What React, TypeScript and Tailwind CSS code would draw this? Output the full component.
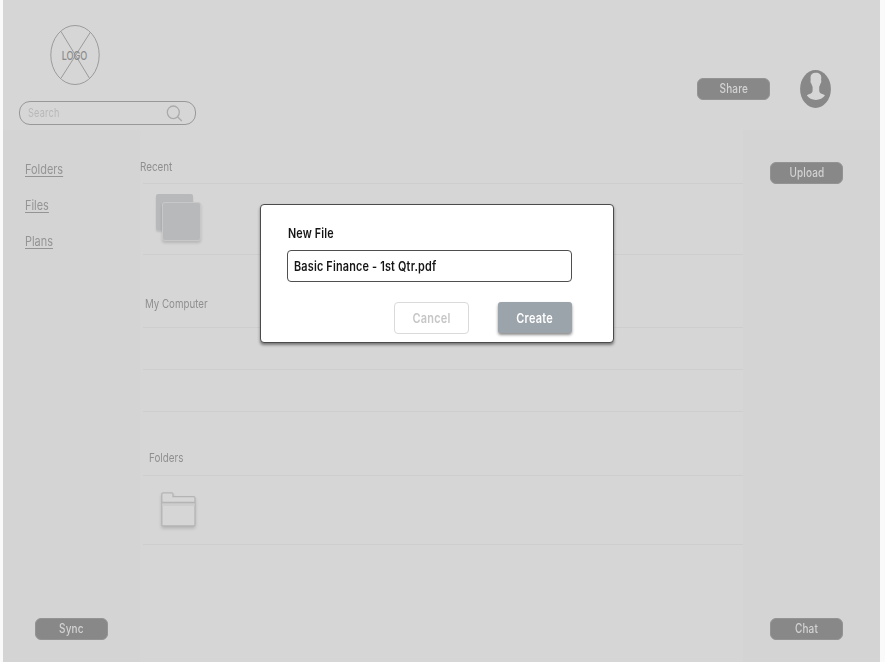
import type { ReactNode } from "react";
import { twMerge } from "tailwind-merge";

function Label({ children, className }: { children: ReactNode; className?: string }) {
  return (
    <span className={twMerge("block w-max origin-left scale-x-[0.82] whitespace-nowrap", className)}>
      {children}
    </span>
  );
}

function PillButton({ label, className }: { label: string; className?: string }) {
  return (
    <button
      className={twMerge(
        "flex h-[22px] w-[73px] items-center justify-center rounded-[6px] border border-[#939393] bg-[#888888] text-[12.5px] leading-[20px] font-medium tracking-[0.2px] text-[#d3d3d3]",
        className,
      )}
    >
      <span className="block scale-x-[0.8]">{label}</span>
    </button>
  );
}

function Logo() {
  return (
    <svg className="block h-[62px] w-[50px]" viewBox="0 0 50 62" fill="none" stroke="#9b9b9b">
      <ellipse cx="25" cy="31" rx="24.2" ry="29.5" />
      <path d="M10.8 7.2 39.6 54.5M40.4 8.2 10.8 54.5" />
      <text
        transform="translate(24.5 35.5) scale(.76 1)"
        textAnchor="middle"
        fontSize="12"
        fontWeight="500"
        fill="#8c8c8c"
        stroke="none"
      >
        LOGO
      </text>
    </svg>
  );
}

function Avatar() {
  return (
    <svg className="block h-[38px] w-[31px]" viewBox="0 0 31 38">
      <ellipse cx="15.5" cy="19" rx="15.4" ry="18.9" fill="#888888" />
      <path
        fill="#d6d6d6"
        d="M15.8 2.7C12.4 2.7 10.5 4.5 10.5 7.6L10.7 10C10.2 11 10.6 13 11.3 13.6C11.6 15 12.1 16 12.6 16.8V20.5C12.6 22.6 11.4 23.5 9.6 24.1C8.200 24.500 7.300 24.900 6.900 25.500C8.800 28.300 11.900 29.900 15.800 29.900S23 28.300 24.900 25.500C24.500 24.900 23.600 24.500 22.200 24.100C20.400 23.500 19.200 22.600 19.200 20.500V16.800C19.700 16 20.200 15 20.500 13.600C21.200 13 21.600 11 21.100 10L21.300 7.600C21.300 4.500 19.200 2.700 15.800 2.700Z"
      />
    </svg>
  );
}

function FolderIcon() {
  return (
    <svg
      className="block h-[36px] w-[36px] overflow-visible drop-shadow-[0_2px_1.5px_rgba(0,0,0,0.14)]"
      viewBox="0 0 36 36"
      fill="#d6d6d6"
      stroke="#b4b4b4"
      strokeWidth="1.3"
    >
      <path d="M.8 32.5V2.2Q.8.8 2.2.8H10.5q1.5 0 1.5 1.5V4.7H32.5q1.5 0 1.5 1.5V32.5q0 1.5-1.5 1.5H2.3Q.8 34 .8 32.5Z" />
      <path d="M1.500 12.500h32" stroke="#cdcdcd" strokeWidth="3" />
      <path d="M.8 10.500h33.200" />
    </svg>
  );
}

export default function App() {
  return (
    <div className="relative h-[662px] w-[885px] overflow-hidden bg-[#fafafa] pl-[3px] font-[Inter,'Liberation_Sans',sans-serif]">
      <div className="flex h-full w-[877px] flex-col bg-[#d6d6d6]">
        <header className="flex h-[130px] shrink-0 justify-between pr-[49px] pl-[16px]">
          <div className="flex flex-col pt-[24px]">
            <div className="pl-[31px]">
              <Logo />
            </div>
            <div className="mt-[15px] flex h-[24px] w-[177px] items-center justify-between rounded-[11px] border border-[#989898] pr-[12px] pl-[8px]">
              <Label className="scale-x-[0.76] text-[12px] tracking-[0.3px] text-[#b8b8b8]">Search</Label>
              <svg className="h-[17px] w-[17px]" viewBox="0 0 17 17" fill="none" stroke="#ababab" strokeWidth="1.3">
                <ellipse cx="7.3" cy="7.3" rx="6" ry="6.3" />
                <path d="m11.5 11.8 4.3 4.2" />
              </svg>
            </div>
          </div>
          <div className="flex items-start">
            <PillButton label="Share" className="mt-[78px]" />
            <div className="mt-[70px] ml-[30px]">
              <Avatar />
            </div>
          </div>
        </header>

        <div className="flex min-h-0 flex-1">
          <aside className="flex w-[137px] shrink-0 flex-col justify-between bg-[#d4d4d4] pb-[22px] pl-[22px]">
            <nav className="flex flex-col gap-[16px] pt-[29px] text-[13px] leading-[20px] text-[#949494]">
              <Label className="scale-x-[0.84] underline underline-offset-[2px]">Folders</Label>
              <Label className="scale-x-[0.84] underline underline-offset-[2px]">Files</Label>
              <Label className="scale-x-[0.84] underline underline-offset-[2px]">Plans</Label>
            </nav>
            <PillButton label="Sync" className="ml-[10px]" />
          </aside>

          <main className="w-[603px] shrink-0 text-[12px] text-[#8f8f8f]">
            <section className="h-[125px]">
              <h2 className="h-[53px] pt-[28px] leading-[18px]">
                <Label>Recent</Label>
              </h2>
              <div className="ml-[3px] h-[72px] border-y border-[#cecece] pt-[10px] pl-[13px]">
                <div className="grid w-[44px]">
                  <span className="col-start-1 row-start-1 h-[36px] w-[37px] rounded-[2px] bg-[#b7b9bb] shadow-[0_2px_2px_rgba(0,0,0,0.12)]" />
                  <span className="col-start-1 row-start-1 mt-[9px] ml-[7px] h-[37px] w-[37px] rounded-[2px] bg-[#b7b9bb] shadow-[0_0_0_1px_#c8c8c8,0_2px_3px_1px_rgba(0,0,0,0.15)]" />
                </div>
              </div>
            </section>
            <section className="h-[157px]">
              <h2 className="h-[72px] pt-[40px] pl-[5px] leading-[18px]">
                <Label className="scale-x-[0.81]">My Computer</Label>
              </h2>
              <div className="ml-[3px] h-[43px] border-y border-[#cecece]" />
              <div className="ml-[3px] h-[42px] border-b border-[#cecece]" />
            </section>
            <section>
              <h2 className="h-[63px] pt-[37px] pl-[9px] leading-[18px]">
                <Label>Folders</Label>
              </h2>
              <div className="ml-[3px] h-[70px] border-y border-[#cecece] pt-[16px] pl-[18px]">
                <FolderIcon />
              </div>
            </section>
          </main>

          <aside className="flex w-[137px] shrink-0 flex-col justify-between bg-[#d4d4d4] pt-[32px] pb-[22px] pl-[27px]">
            <PillButton label="Upload" />
            <PillButton label="Chat" />
          </aside>
        </div>
      </div>

      <div
        role="dialog"
        className="absolute top-[204px] left-[260px] flex h-[139px] w-[354px] flex-col rounded-[4px] border border-[#4b4b4b] bg-white pt-[18px] pl-[26px] shadow-[0_2px_3px_rgba(0,0,0,0.45)]"
      >
        <Label className="ml-[1px] scale-x-[0.83] text-[13px] leading-[20px] font-semibold tracking-[0.2px] text-[#151515]">
          New File
        </Label>
        <div className="mt-[7px] flex h-[32px] w-[285px] items-center rounded-[4px] border border-[#4f4f4f] pt-[2px] pl-[6px]">
          <Label className="scale-x-[0.835] text-[13px] font-semibold tracking-[0.22px] text-[#151515]">
            Basic Finance - 1st Qtr.pdf
          </Label>
        </div>
        <div className="mt-[20px] flex gap-[29px] pl-[107px] text-[13.5px] font-semibold tracking-[0.3px]">
          <button className="flex h-[32px] w-[75px] items-center justify-center rounded-[4px] border border-[#dadada] text-[#c6c6c6]">
            <span className="block scale-x-[0.81]">Cancel</span>
          </button>
          <button className="flex h-[31px] w-[74px] items-center justify-center rounded-[3px] bg-[#9ba3ab] pt-[1px] text-white shadow-[0_2px_3px_rgba(0,0,0,0.45)]">
            <span className="block scale-x-[0.81]">Create</span>
          </button>
        </div>
      </div>
    </div>
  );
}
